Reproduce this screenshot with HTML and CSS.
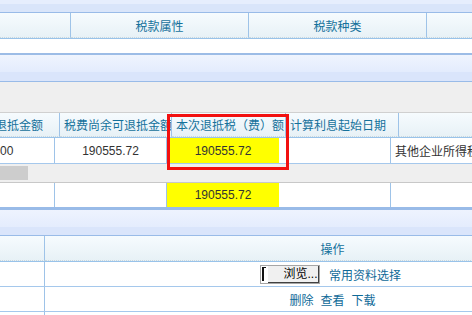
FILE: index.html
```html
<!DOCTYPE html>
<html lang="zh-CN">
<head>
    <meta charset="UTF-8">
    <title>退抵税（费）信息</title>
    <link rel="stylesheet" href="styles.css">
</head>
<body>
    <div class="page">
        <!-- 上方税款列表 -->
        <div class="top-band"></div>
        <div class="row head-row">
            <div class="cell hcell w71"></div>
            <div class="cell hcell w178 center">税款属性</div>
            <div class="cell hcell w178 center">税款种类</div>
            <div class="cell hcell grow"></div>
        </div>
        <div class="blank-row"></div>
        <div class="panel"></div>

        <div class="gap"></div>

        <!-- 退抵明细 -->
        <div class="grid2">
            <div class="row head-row head2">
                <div class="cell hcell w60 first">退抵金额</div>
                <div class="cell hcell w112">税费尚余可退抵金额</div>
                <div class="cell hcell w114">本次退抵税（费）额</div>
                <div class="cell hcell w113">计算利息起始日期</div>
                <div class="cell hcell grow"></div>
            </div>
            <div class="row data-row">
                <div class="cell w55 first-data">00</div>
                <div class="cell w112 center">190555.72</div>
                <div class="cell w112 center yellow">190555.72</div>
                <div class="cell w112"></div>
                <div class="cell grow left">其他企业所得税</div>
            </div>
            <div class="scroll-area">
                <div class="thumb"></div>
            </div>
            <div class="row sum-row">
                <div class="cell w55"></div>
                <div class="cell w112"></div>
                <div class="cell w112 center yellow">190555.72</div>
                <div class="cell w112"></div>
                <div class="cell grow"></div>
            </div>
            <div class="red-box"></div>
        </div>

        <div class="panel panel2"></div>

        <!-- 附件资料 -->
        <div class="row head-row">
            <div class="cell hcell w45"></div>
            <div class="cell hcell w576 center">操作</div>
        </div>
        <div class="row att-row">
            <div class="cell w45"></div>
            <div class="cell w576 center">
                <span class="file-input"><span class="field"></span><span class="browse">浏览...</span></span>
                <a class="link" href="#">常用资料选择</a>
            </div>
        </div>
        <div class="row att-row">
            <div class="cell w45"></div>
            <div class="cell w576 center">
                <a class="link" href="#">删除</a>
                <a class="link" href="#">查看</a>
                <a class="link" href="#">下载</a>
            </div>
        </div>
        <div class="row att-row">
            <div class="cell w45"></div>
            <div class="cell w576 center">
                <span class="file-input"><span class="field"></span><span class="browse">浏览...</span></span>
                <a class="link" href="#">常用资料选择</a>
            </div>
        </div>
    </div>
</body>
</html>
```

FILE: styles.css
```css
body {
    margin: 0;
    background-color: #efefef;
    font-family: "Liberation Sans", "Noto Sans CJK SC", sans-serif;
    font-size: 12px;
    color: #222;
}

.page {
    width: 472px;
    height: 315px;
    overflow: hidden;
}

.top-band {
    height: 12px;
    background: linear-gradient(#e6eefd 0, #e6eefd 4px, #d9e5fa 4px);
    border-bottom: 1px solid #99bbe8;
}

.row {
    display: flex;
    width: 1000px;
    background-color: #fff;
}

.cell {
    box-sizing: border-box;
    flex: none;
    display: flex;
    align-items: center;
    overflow: hidden;
    white-space: nowrap;
    border-right: 1px solid #9ec3e8;
}

.cell.grow {
    flex: 1;
    border-right: none;
}

.center {
    justify-content: center;
}

.left {
    padding-left: 4px;
}

.head-row {
    height: 25px;
    background: linear-gradient(#f6fbfe, #e7f1f6);
    border-bottom: 1px solid #99c3ea;
}

.hcell {
    color: #15719b;
    border-bottom: 1px dotted #cbd8de;
    padding-left: 4px;
}

.hcell.center {
    padding-left: 0;
}

.w45 { width: 45px; }
.w55 { width: 55px; }
.w60 { width: 60px; }
.w71 { width: 71px; }
.w112 { width: 112px; }
.w113 { width: 113px; }
.w114 { width: 114px; }
.w178 { width: 178px; }
.w576 { width: 576px; }

.blank-row {
    height: 14px;
    background-color: #fff;
}

.panel {
    height: 26px;
    border-top: 2px solid #9cbce6;
    border-bottom: 1px solid #99bbe8;
    background: linear-gradient(#eff4fe, #e3ecfd 17px, #dae5fb 17px);
}

.gap {
    height: 30px;
}

.grid2 {
    position: relative;
}

.head2 {
    height: 24px;
    border-top: 1px solid #d0d0d0;
}

.first {
    padding-left: 0;
    text-indent: -5px;
}

.data-row {
    height: 25px;
    border-bottom: 1px solid #a5c8ec;
    color: #333;
}

.sum-row {
    height: 24px;
    color: #333;
}

.first-data {
    padding-left: 0;
}

.yellow {
    background-color: #ffff00;
    border-right: none;
}

.scroll-area {
    box-sizing: border-box;
    height: 19px;
    padding-top: 2px;
    border-bottom: 1px solid #c8c8c8;
    background-color: #efefef;
}

.thumb {
    width: 28px;
    height: 14px;
    background-color: #cdcdcd;
}

.red-box {
    position: absolute;
    left: 167px;
    top: 2px;
    width: 122px;
    height: 56px;
    box-sizing: border-box;
    border: 3px solid #f21010;
}

.panel2 {
    height: 25px;
    border-top: 3px solid #99bbe8;
    background: linear-gradient(#eef3fe, #e4ecfd 17px, #dae5fb 17px);
}

.att-row {
    height: 24px;
    border-bottom: 1px solid #a5c8ec;
}

.link {
    color: #0f6a98;
    text-decoration: none;
    margin: 0 3.5px;
}

.file-input {
    display: inline-flex;
    box-sizing: border-box;
    width: 60px;
    height: 19px;
    border: 1px solid #a5a5a5;
    background-color: #fff;
    margin-right: 5px;
}

.file-input .field {
    width: 2px;
    margin: 1px 2px 2px 1px;
    border-left: 2px solid #111;
    border-top: 1px solid #111;
}

.file-input .browse {
    flex: 1;
    overflow: hidden;
    background-color: #f0f0f0;
    border-bottom: 1px solid #404040;
    border-right: 1px solid #404040;
    font-size: 12px;
    line-height: 16px;
    padding-left: 15px;
    color: #000;
}
```
